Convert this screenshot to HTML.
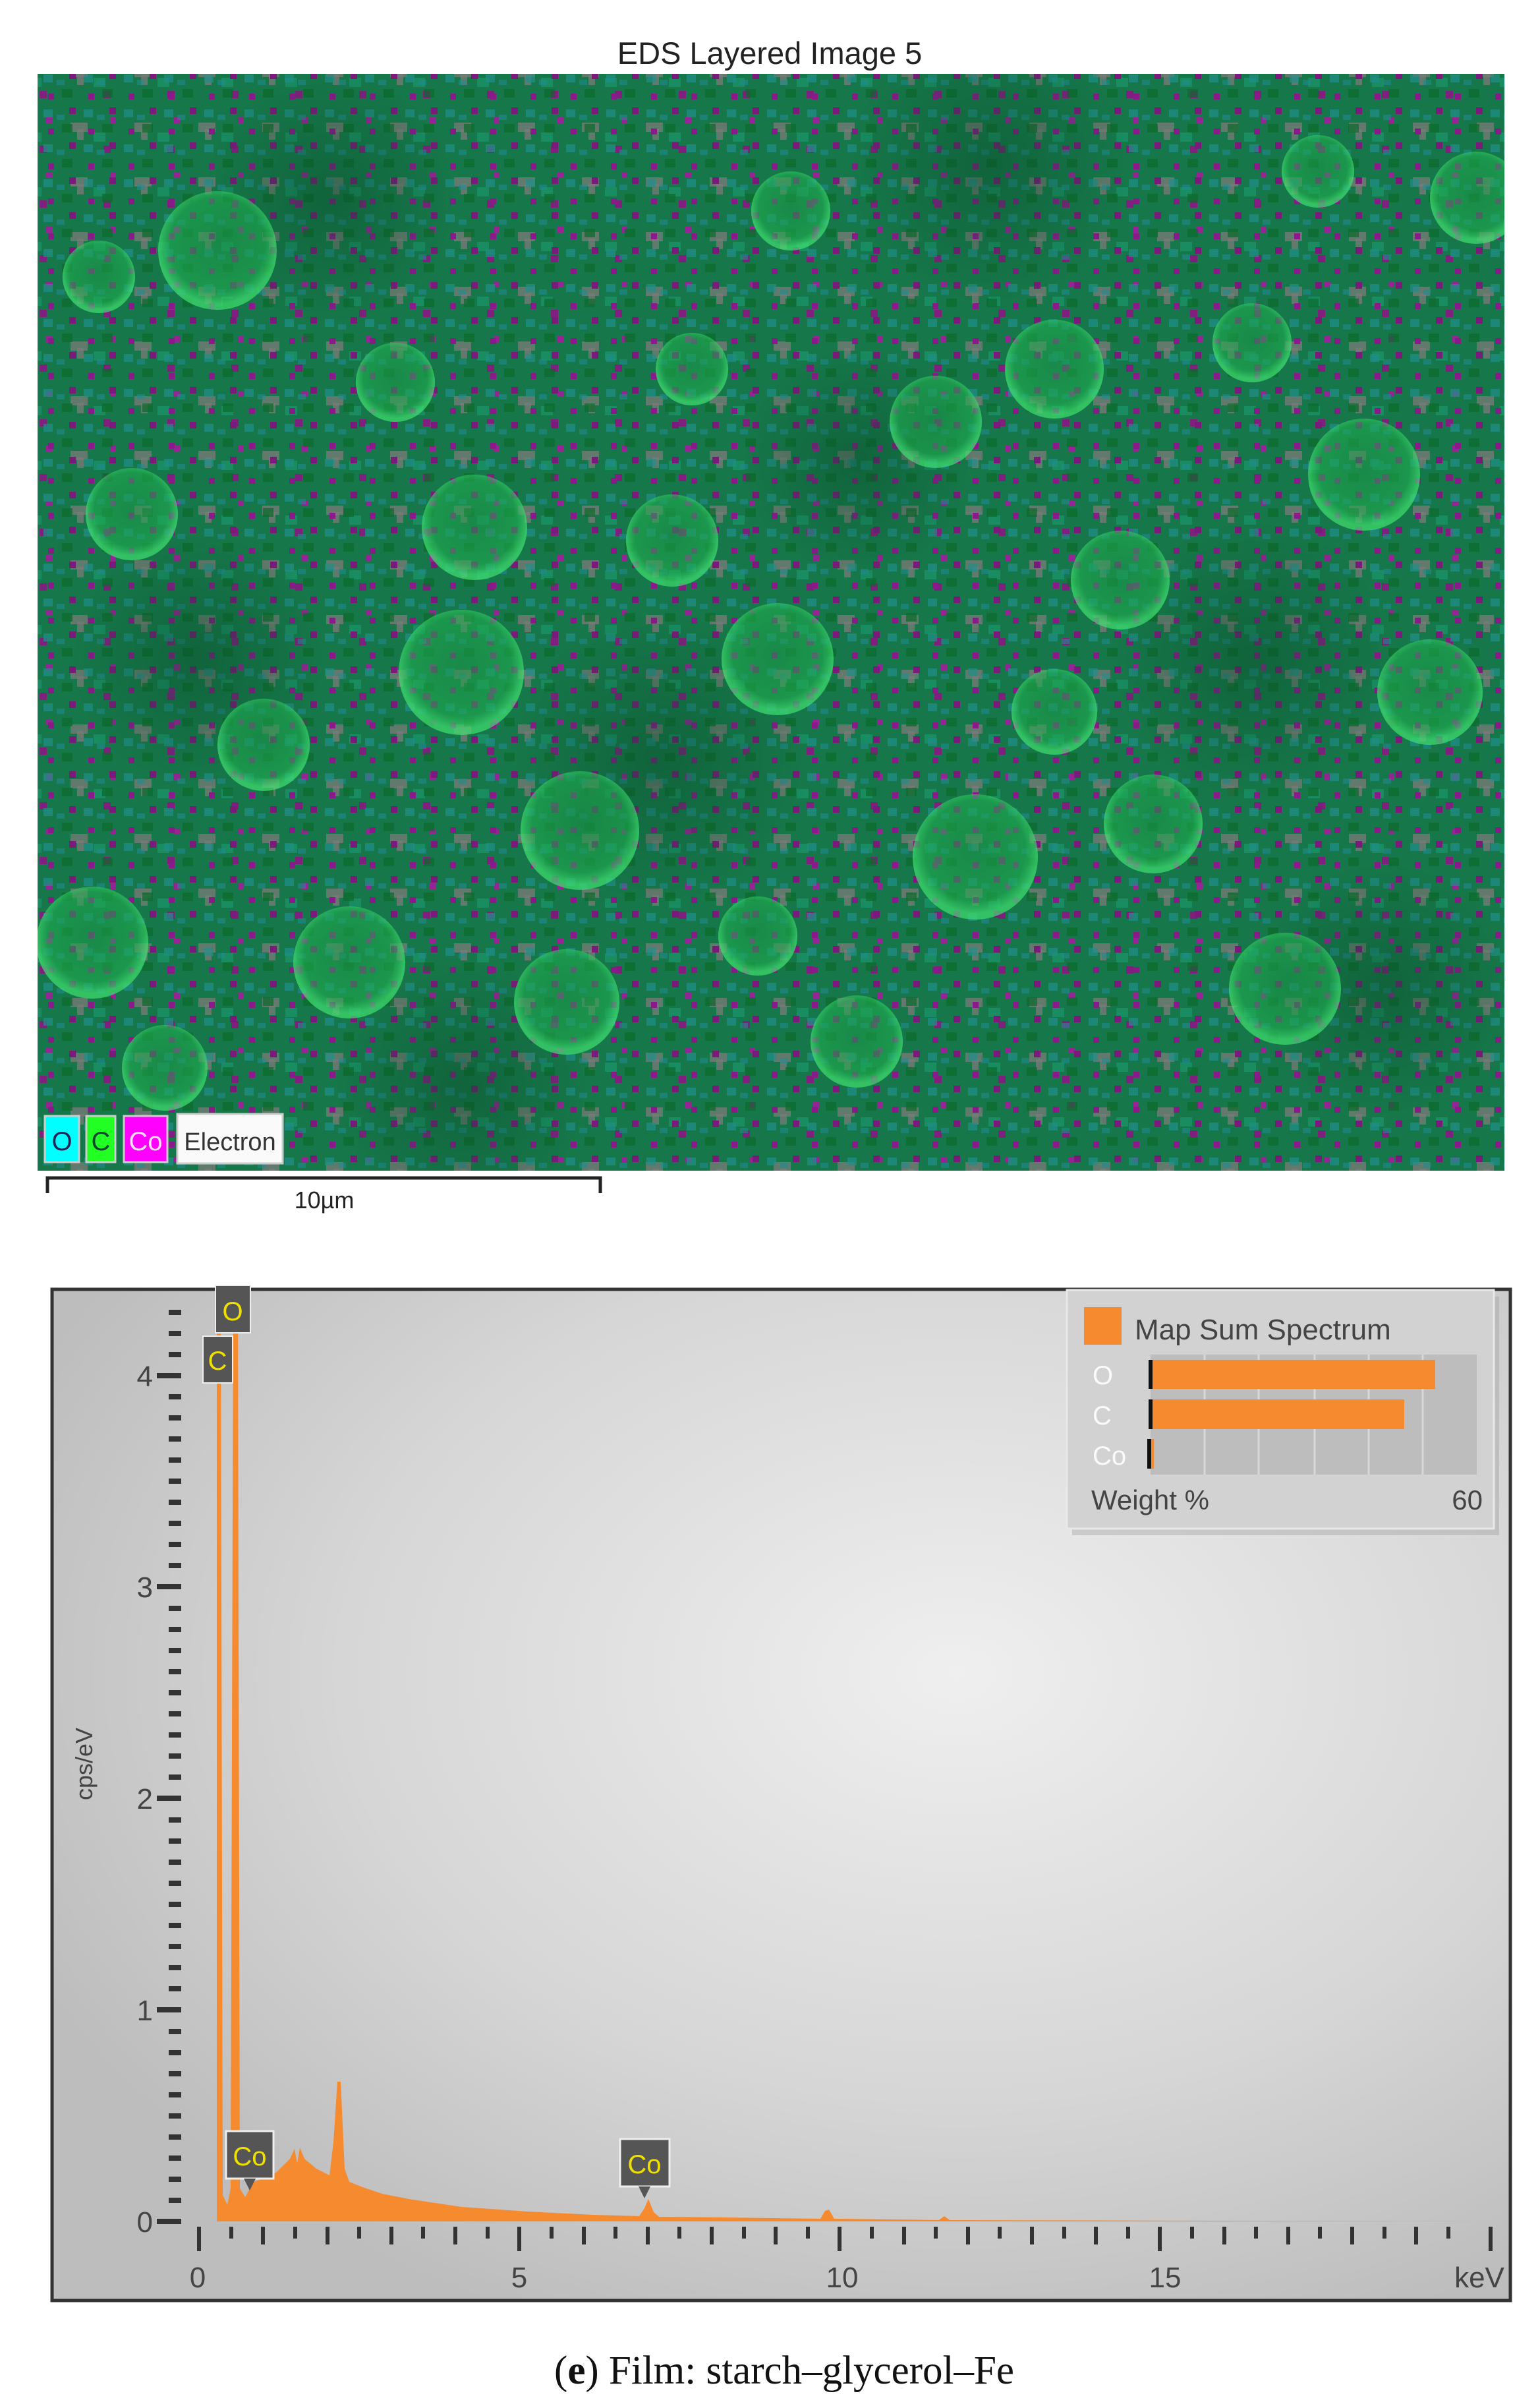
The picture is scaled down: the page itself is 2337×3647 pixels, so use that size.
<!DOCTYPE html>
<html><head><meta charset="utf-8"><style>
html,body{margin:0;padding:0;background:#fff;}
svg{display:block;}
</style></head><body>
<svg width="2337" height="3647" viewBox="0 0 2337 3647" xmlns="http://www.w3.org/2000/svg" font-family="Liberation Sans, sans-serif">
<defs>
  <pattern id="p1" width="61" height="53" patternUnits="userSpaceOnUse">
    <rect x="5" y="7" width="14" height="12" fill="#1f8f8a" opacity=".7"/>
    <rect x="33" y="29" width="16" height="13" fill="#0a6a2a" opacity=".7"/>
    <rect x="44" y="4" width="10" height="10" fill="#7a1a7a"/>
    <rect x="12" y="36" width="9" height="9" fill="#8a1a8a"/>
    <rect x="25" y="15" width="12" height="8" fill="#208a90" opacity=".6"/>
  </pattern>
  <pattern id="p2" width="97" height="83" patternUnits="userSpaceOnUse">
    <rect x="10" y="20" width="26" height="14" fill="#7a7a78" opacity=".75"/>
    <rect x="20" y="30" width="10" height="16" fill="#7a7a78" opacity=".75"/>
    <rect x="60" y="55" width="11" height="11" fill="#80207e"/>
    <rect x="70" y="12" width="9" height="9" fill="#952495"/>
    <rect x="45" y="35" width="18" height="14" fill="#1a9a70" opacity=".6"/>
  </pattern>
  <radialGradient id="blob" cx="50%" cy="45%" r="50%">
    <stop offset="0" stop-color="#1c9a48" stop-opacity=".5"/>
    <stop offset=".8" stop-color="#20b050" stop-opacity=".55"/>
    <stop offset="1" stop-color="#40e070" stop-opacity=".7"/>
  </radialGradient>
  <radialGradient id="dark" cx="50%" cy="50%" r="50%">
    <stop offset="0" stop-color="#0a4a2a" stop-opacity=".45"/>
    <stop offset="1" stop-color="#0a4a2a" stop-opacity="0"/>
  </radialGradient>
  <radialGradient id="bg" cx="62%" cy="38%" r="70%">
    <stop offset="0" stop-color="#efefef"/>
    <stop offset=".6" stop-color="#d6d6d6"/>
    <stop offset="1" stop-color="#bdbdbd"/>
  </radialGradient>
  <clipPath id="sem"><rect x="57" y="112" width="2226" height="1664"/></clipPath>
  <clipPath id="plot"><rect x="80" y="1958" width="2212" height="1530"/></clipPath>
</defs>

<text x="1168" y="97" font-size="47" text-anchor="middle" fill="#222">EDS Layered Image 5</text>

<g clip-path="url(#sem)">
  <rect x="57" y="112" width="2226" height="1664" fill="#16784a"/>
  <rect x="57" y="112" width="2226" height="1664" fill="url(#p2)"/>
  <rect x="57" y="112" width="2226" height="1664" fill="url(#p1)"/>
  <g fill="url(#dark)">
    <circle cx="500" cy="300" r="200"/><circle cx="1500" cy="250" r="220"/><circle cx="1000" cy="1150" r="230"/>
    <circle cx="300" cy="1000" r="200"/><circle cx="1900" cy="1000" r="220"/><circle cx="1300" cy="700" r="180"/>
    <circle cx="2100" cy="1500" r="200"/><circle cx="700" cy="1650" r="200"/>
  </g>
  <g fill="url(#blob)">
    <circle cx="330" cy="380" r="90"/><circle cx="720" cy="800" r="80"/><circle cx="1180" cy="1000" r="85"/>
    <circle cx="1600" cy="560" r="75"/><circle cx="1900" cy="520" r="60"/><circle cx="700" cy="1020" r="95"/>
    <circle cx="1020" cy="820" r="70"/><circle cx="1420" cy="640" r="70"/><circle cx="2070" cy="720" r="85"/>
    <circle cx="880" cy="1260" r="90"/><circle cx="1480" cy="1300" r="95"/><circle cx="530" cy="1460" r="85"/>
    <circle cx="140" cy="1430" r="85"/><circle cx="860" cy="1520" r="80"/><circle cx="1750" cy="1250" r="75"/>
    <circle cx="2170" cy="1050" r="80"/><circle cx="1200" cy="320" r="60"/><circle cx="1950" cy="1500" r="85"/>
    <circle cx="200" cy="780" r="70"/><circle cx="1300" cy="1580" r="70"/><circle cx="2240" cy="300" r="70"/>
    <circle cx="600" cy="580" r="60"/><circle cx="1700" cy="880" r="75"/><circle cx="400" cy="1130" r="70"/>
    <circle cx="1050" cy="560" r="55"/><circle cx="1600" cy="1080" r="65"/><circle cx="150" cy="420" r="55"/>
    <circle cx="2000" cy="260" r="55"/><circle cx="1150" cy="1420" r="60"/><circle cx="250" cy="1620" r="65"/>
  </g>
  <rect x="68" y="1693" width="52" height="70" fill="#0ff" stroke="#ccc" stroke-width="3"/>
  <text x="94" y="1745" font-size="40" text-anchor="middle" fill="#225">O</text>
  <rect x="131" y="1693" width="44" height="70" fill="#2f2" stroke="#ccc" stroke-width="3"/>
  <text x="153" y="1745" font-size="40" text-anchor="middle" fill="#143">C</text>
  <rect x="188" y="1693" width="66" height="70" fill="#f0f" stroke="#ccc" stroke-width="3"/>
  <text x="221" y="1745" font-size="40" text-anchor="middle" fill="#fdf">Co</text>
  <rect x="269" y="1690" width="160" height="75" fill="#fafafa" stroke="#ccc" stroke-width="3"/>
  <text x="349" y="1745" font-size="38" text-anchor="middle" fill="#333">Electron</text>
</g>

<path d="M72 1810 V1787 H911 V1810" fill="none" stroke="#222" stroke-width="5"/>
<text x="492" y="1833" font-size="36" text-anchor="middle" fill="#222">10µm</text>

<rect x="79" y="1956" width="2213" height="1534" fill="url(#bg)" stroke="#333" stroke-width="5"/>
<g clip-path="url(#plot)">
<path fill="#f68a2e" d="M329 3370 L329 1958 L335 1958 L338 3330 L345 3345 L350 3320 L354 1958 L361 1958 L364 3320 L372 3333 L385 3310 L400 3305 L420 3295 L440 3275 L447 3260 L451 3282 L455 3258 L462 3275 L480 3290 L500 3300 L506 3250 L512 3158 L517 3158 L523 3290 L530 3310 L550 3318 L580 3328 L620 3336 L700 3348 L800 3355 L900 3360 L970 3362 L978 3350 L984 3336 L992 3356 L1000 3363 L1100 3364 L1245 3366 L1252 3354 L1258 3352 L1266 3366 L1425 3368 L1433 3362 L1441 3368 L2262 3370 Z"/>
</g>

<g fill="#333">
  <rect x="256" y="3366" width="19" height="8"/><rect x="256" y="3334" width="19" height="8"/><rect x="256" y="3302" width="19" height="8"/><rect x="256" y="3270" width="19" height="8"/><rect x="256" y="3238" width="19" height="8"/><rect x="256" y="3206" width="19" height="8"/><rect x="256" y="3174" width="19" height="8"/><rect x="256" y="3142" width="19" height="8"/><rect x="256" y="3110" width="19" height="8"/><rect x="256" y="3078" width="19" height="8"/>
  <rect x="256" y="3045" width="19" height="8"/><rect x="256" y="3013" width="19" height="8"/><rect x="256" y="2981" width="19" height="8"/><rect x="256" y="2949" width="19" height="8"/><rect x="256" y="2917" width="19" height="8"/><rect x="256" y="2885" width="19" height="8"/><rect x="256" y="2853" width="19" height="8"/><rect x="256" y="2821" width="19" height="8"/><rect x="256" y="2789" width="19" height="8"/><rect x="256" y="2757" width="19" height="8"/>
  <rect x="256" y="2724" width="19" height="8"/><rect x="256" y="2692" width="19" height="8"/><rect x="256" y="2660" width="19" height="8"/><rect x="256" y="2628" width="19" height="8"/><rect x="256" y="2596" width="19" height="8"/><rect x="256" y="2564" width="19" height="8"/><rect x="256" y="2532" width="19" height="8"/><rect x="256" y="2500" width="19" height="8"/><rect x="256" y="2468" width="19" height="8"/><rect x="256" y="2436" width="19" height="8"/>
  <rect x="256" y="2403" width="19" height="8"/><rect x="256" y="2371" width="19" height="8"/><rect x="256" y="2339" width="19" height="8"/><rect x="256" y="2307" width="19" height="8"/><rect x="256" y="2275" width="19" height="8"/><rect x="256" y="2243" width="19" height="8"/><rect x="256" y="2211" width="19" height="8"/><rect x="256" y="2179" width="19" height="8"/><rect x="256" y="2147" width="19" height="8"/><rect x="256" y="2115" width="19" height="8"/>
  <rect x="256" y="2083" width="19" height="8"/><rect x="256" y="2051" width="19" height="8"/><rect x="256" y="2019" width="19" height="8"/><rect x="256" y="1987" width="19" height="8"/>
  <rect x="238" y="3366" width="37" height="8"/><rect x="238" y="3045" width="37" height="8"/><rect x="238" y="2724" width="37" height="8"/><rect x="238" y="2403" width="37" height="8"/><rect x="238" y="2083" width="37" height="8"/>
</g>
<g font-size="44" fill="#444" text-anchor="end">
  <text x="232" y="3386">0</text><text x="232" y="3065">1</text><text x="232" y="2744">2</text><text x="232" y="2423">3</text><text x="232" y="2103">4</text>
</g>
<text transform="translate(140,2676) rotate(-90)" font-size="36" fill="#444" text-anchor="middle">cps/eV</text>

<g stroke="#333" stroke-width="6">
  <path d="M302 3378V3415M351 3378V3396M399 3378V3405M448 3378V3396M497 3378V3405M545 3378V3396M594 3378V3405M642 3378V3396M691 3378V3405M740 3378V3396M788 3378V3415M837 3378V3396M886 3378V3405M934 3378V3396M983 3378V3405M1031 3378V3396M1080 3378V3405M1129 3378V3396M1177 3378V3405M1226 3378V3396M1274 3378V3415M1323 3378V3396M1372 3378V3405M1420 3378V3396M1469 3378V3405M1517 3378V3396M1566 3378V3405M1615 3378V3396M1663 3378V3405M1712 3378V3396M1760 3378V3415M1809 3378V3396M1858 3378V3405M1906 3378V3396M1955 3378V3405M2003 3378V3396M2052 3378V3405M2101 3378V3396M2149 3378V3405M2198 3378V3396M2262 3378V3415"/>
</g>
<g font-size="44" fill="#444" text-anchor="middle">
  <text x="300" y="3470">0</text><text x="788" y="3470">5</text><text x="1278" y="3470">10</text><text x="1768" y="3470">15</text><text x="2245" y="3470">keV</text>
</g>

<g font-size="40" fill="#f0e000" text-anchor="middle">
  <rect x="327" y="1950" width="53" height="72" fill="#555" stroke="#eee" stroke-width="2"/>
  <text x="353" y="2003">O</text>
  <rect x="308" y="2027" width="45" height="71" fill="#555" stroke="#eee" stroke-width="2"/>
  <text x="330" y="2078">C</text>
  <rect x="343" y="3233" width="72" height="72" fill="#555" stroke="#eee" stroke-width="3"/>
  <path d="M370 3305 L379 3323 L388 3305 Z" fill="#555"/>
  <text x="379" y="3285">Co</text>
  <rect x="941" y="3245" width="75" height="72" fill="#555" stroke="#eee" stroke-width="3"/>
  <path d="M969 3317 L978 3335 L987 3317 Z" fill="#555"/>
  <text x="978" y="3297">Co</text>
</g>

<rect x="1627" y="1967" width="648" height="362" fill="#999" opacity=".35"/>
<rect x="1619" y="1957" width="648" height="362" fill="#d2d2d2" stroke="#e8e8e8" stroke-width="3"/>
<rect x="1645" y="1983" width="57" height="57" fill="#f68a2e"/>
<text x="1722" y="2032" font-size="44" fill="#444">Map Sum Spectrum</text>
<rect x="1746" y="2055" width="495" height="182" fill="#bdbdbd"/>
<g stroke="#d8d8d8" stroke-width="3"><path d="M1828 2055V2237M1910 2055V2237M1995 2055V2237M2077 2055V2237M2159 2055V2237"/></g>
<rect x="1748" y="2063" width="430" height="44" fill="#f68a2e"/>
<rect x="1748" y="2123" width="383" height="45" fill="#f68a2e"/>
<rect x="1746" y="2183" width="5" height="45" fill="#f68a2e"/>
<g fill="#111"><rect x="1743" y="2063" width="6" height="44"/><rect x="1743" y="2123" width="6" height="45"/><rect x="1741" y="2183" width="6" height="45"/></g>
<g font-size="40" fill="#fafafa"><text x="1658" y="2100">O</text><text x="1658" y="2161">C</text><text x="1658" y="2222">Co</text></g>
<text x="1656" y="2290" font-size="42" fill="#444">Weight %</text>
<text x="2250" y="2290" font-size="42" fill="#444" text-anchor="end">60</text>

<text x="1190" y="3616" font-family="Liberation Serif, serif" font-size="61" fill="#111" text-anchor="middle">(<tspan font-weight="bold">e</tspan>) Film: starch–glycerol–Fe</text>
</svg>
</body></html>
